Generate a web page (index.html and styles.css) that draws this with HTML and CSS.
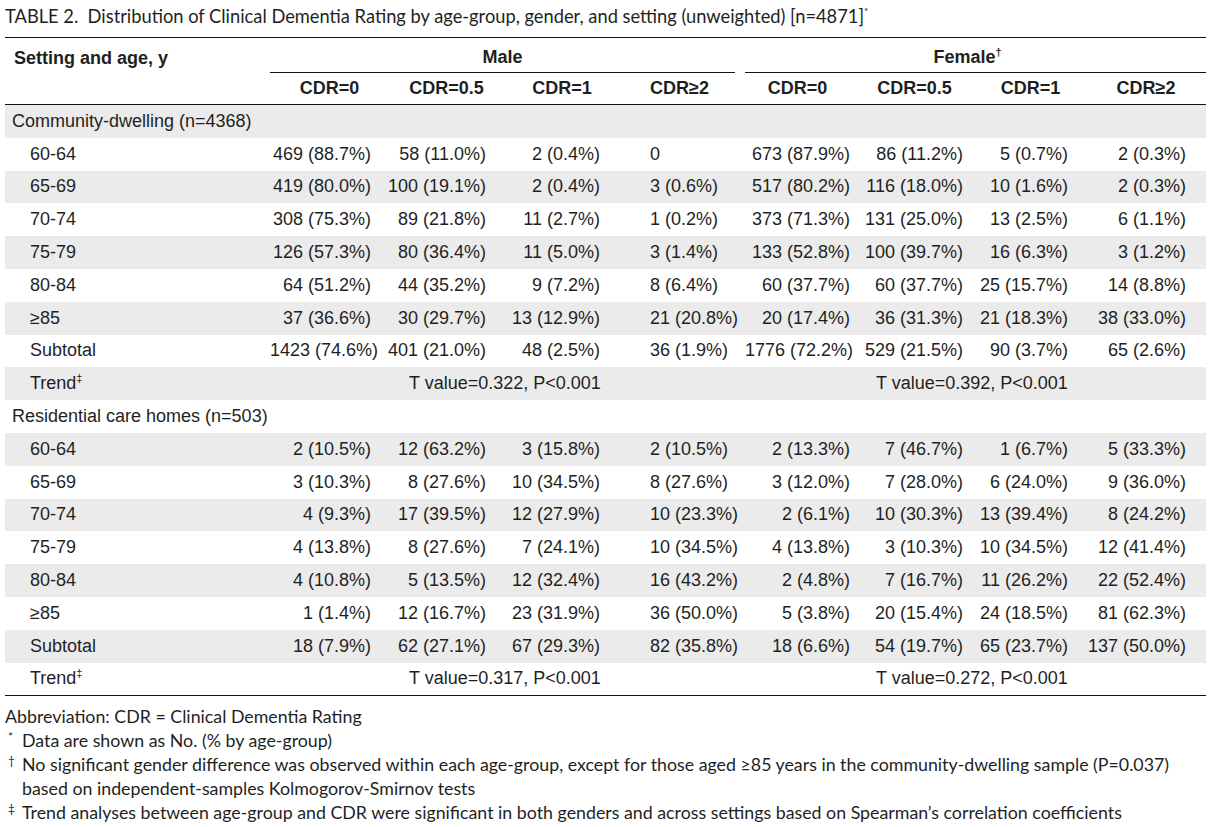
FILE: index.html
```html
<!DOCTYPE html>
<html lang="en">
<head>
<meta charset="utf-8">
<title>Table 2</title>
<link rel="stylesheet" href="styles.css">
</head>
<body>
<div class="page">
  <p class="caption">TABLE 2.&nbsp; Distribution of Clinical Dementia Rating by age-group, gender, and setting (unweighted) [n=4871]<sup>*</sup></p>
  <table class="cdr">
    <colgroup>
      <col class="c-label">
      <col class="c-m0"><col class="c-m05"><col class="c-m1"><col class="c-m2">
      <col class="c-gap">
      <col class="c-f0"><col class="c-f05"><col class="c-f1"><col class="c-f2">
    </colgroup>
    <thead>
      <tr class="h1">
        <th class="lbl">Setting and age, y</th>
        <th colspan="4" class="grp">Male</th>
        <th class="gap"></th>
        <th colspan="4" class="grp grp-f">Female<sup>†</sup></th>
      </tr>
      <tr class="h2">
        <th></th>
        <th class="hm0">CDR=0</th><th class="hm05">CDR=0.5</th><th class="hm1">CDR=1</th><th class="hm2">CDR≥2</th>
        <th class="gap"></th>
        <th class="hf0">CDR=0</th><th class="hf05">CDR=0.5</th><th class="hf1">CDR=1</th><th class="hf2">CDR≥2</th>
      </tr>
    </thead>
    <tbody>
      <tr class="section"><td colspan="10">Community-dwelling (n=4368)</td></tr>
      <tr><td class="age">60-64</td><td>469 (88.7%)</td><td>58 (11.0%)</td><td>2 (0.4%)</td><td class="l">0</td><td></td><td>673 (87.9%)</td><td>86 (11.2%)</td><td>5 (0.7%)</td><td class="rf">2 (0.3%)</td></tr>
      <tr><td class="age">65-69</td><td>419 (80.0%)</td><td>100 (19.1%)</td><td>2 (0.4%)</td><td class="l">3 (0.6%)</td><td></td><td>517 (80.2%)</td><td>116 (18.0%)</td><td>10 (1.6%)</td><td class="rf">2 (0.3%)</td></tr>
      <tr><td class="age">70-74</td><td>308 (75.3%)</td><td>89 (21.8%)</td><td>11 (2.7%)</td><td class="l">1 (0.2%)</td><td></td><td>373 (71.3%)</td><td>131 (25.0%)</td><td>13 (2.5%)</td><td class="rf">6 (1.1%)</td></tr>
      <tr><td class="age">75-79</td><td>126 (57.3%)</td><td>80 (36.4%)</td><td>11 (5.0%)</td><td class="l">3 (1.4%)</td><td></td><td>133 (52.8%)</td><td>100 (39.7%)</td><td>16 (6.3%)</td><td class="rf">3 (1.2%)</td></tr>
      <tr><td class="age">80-84</td><td>64 (51.2%)</td><td>44 (35.2%)</td><td>9 (7.2%)</td><td class="l">8 (6.4%)</td><td></td><td>60 (37.7%)</td><td>60 (37.7%)</td><td>25 (15.7%)</td><td class="rf">14 (8.8%)</td></tr>
      <tr><td class="age">≥85</td><td>37 (36.6%)</td><td>30 (29.7%)</td><td>13 (12.9%)</td><td class="l">21 (20.8%)</td><td></td><td>20 (17.4%)</td><td>36 (31.3%)</td><td>21 (18.3%)</td><td class="rf">38 (33.0%)</td></tr>
      <tr><td class="age">Subtotal</td><td>1423 (74.6%)</td><td>401 (21.0%)</td><td>48 (2.5%)</td><td class="l">36 (1.9%)</td><td></td><td>1776 (72.2%)</td><td>529 (21.5%)</td><td>90 (3.7%)</td><td class="rf">65 (2.6%)</td></tr>
      <tr><td class="age">Trend<sup>‡</sup></td><td></td><td colspan="3" class="trend-m">T value=0.322, P&lt;0.001</td><td></td><td></td><td colspan="3" class="trend-f">T value=0.392, P&lt;0.001</td></tr>
      <tr class="section"><td colspan="10">Residential care homes (n=503)</td></tr>
      <tr><td class="age">60-64</td><td>2 (10.5%)</td><td>12 (63.2%)</td><td>3 (15.8%)</td><td class="l">2 (10.5%)</td><td></td><td>2 (13.3%)</td><td>7 (46.7%)</td><td>1 (6.7%)</td><td class="rf">5 (33.3%)</td></tr>
      <tr><td class="age">65-69</td><td>3 (10.3%)</td><td>8 (27.6%)</td><td>10 (34.5%)</td><td class="l">8 (27.6%)</td><td></td><td>3 (12.0%)</td><td>7 (28.0%)</td><td>6 (24.0%)</td><td class="rf">9 (36.0%)</td></tr>
      <tr><td class="age">70-74</td><td>4 (9.3%)</td><td>17 (39.5%)</td><td>12 (27.9%)</td><td class="l">10 (23.3%)</td><td></td><td>2 (6.1%)</td><td>10 (30.3%)</td><td>13 (39.4%)</td><td class="rf">8 (24.2%)</td></tr>
      <tr><td class="age">75-79</td><td>4 (13.8%)</td><td>8 (27.6%)</td><td>7 (24.1%)</td><td class="l">10 (34.5%)</td><td></td><td>4 (13.8%)</td><td>3 (10.3%)</td><td>10 (34.5%)</td><td class="rf">12 (41.4%)</td></tr>
      <tr><td class="age">80-84</td><td>4 (10.8%)</td><td>5 (13.5%)</td><td>12 (32.4%)</td><td class="l">16 (43.2%)</td><td></td><td>2 (4.8%)</td><td>7 (16.7%)</td><td>11 (26.2%)</td><td class="rf">22 (52.4%)</td></tr>
      <tr><td class="age">≥85</td><td>1 (1.4%)</td><td>12 (16.7%)</td><td>23 (31.9%)</td><td class="l">36 (50.0%)</td><td></td><td>5 (3.8%)</td><td>20 (15.4%)</td><td>24 (18.5%)</td><td class="rf">81 (62.3%)</td></tr>
      <tr><td class="age">Subtotal</td><td>18 (7.9%)</td><td>62 (27.1%)</td><td>67 (29.3%)</td><td class="l">82 (35.8%)</td><td></td><td>18 (6.6%)</td><td>54 (19.7%)</td><td>65 (23.7%)</td><td class="rf">137 (50.0%)</td></tr>
      <tr><td class="age">Trend<sup>‡</sup></td><td></td><td colspan="3" class="trend-m">T value=0.317, P&lt;0.001</td><td></td><td></td><td colspan="3" class="trend-f">T value=0.272, P&lt;0.001</td></tr>
    </tbody>
  </table>
  <div class="notes">
    <p class="abbr">Abbreviation: CDR = Clinical Dementia Rating</p>
    <div class="note"><span class="sym">*</span><span class="txt">Data are shown as No. (% by age-group)</span></div>
    <div class="note"><span class="sym">†</span><span class="txt">No significant gender difference was observed within each age-group, except for those aged ≥85 years in the community-dwelling sample (P=0.037)<br>based on independent-samples Kolmogorov-Smirnov tests</span></div>
    <div class="note"><span class="sym">‡</span><span class="txt">Trend analyses between age-group and CDR were significant in both genders and across settings based on Spearman’s correlation coefficients</span></div>
  </div>
</div>
</body>
</html>
```

FILE: styles.css
```css
html, body {
  margin: 0;
  padding: 0;
  background: #ffffff;
}

.page {
  padding: 0 5px;
  color: #1f1f1f;
}

.caption {
  margin: 0;
  padding-top: 5px;
  height: 37px;
  box-sizing: border-box;
  font-family: "Lato", "Open Sans", sans-serif;
  font-size: 18.3px;
  line-height: 22px;
  white-space: nowrap;
}

.caption sup {
  font-size: 10px;
  vertical-align: 8px;
  line-height: 0;
}

.cdr {
  width: 1201px;
  table-layout: fixed;
  border-collapse: collapse;
  font-family: "Liberation Sans", Arial, sans-serif;
  font-size: 18px;
  color: #1f1f1f;
  border-top: 1px solid #111;
  border-bottom: 1px solid #111;
}

.c-label { width: 265px; }
.c-m0 { width: 113px; }
.c-m05 { width: 115px; }
.c-m1 { width: 114px; }
.c-m2 { width: 123px; }
.c-gap { width: 10px; }
.c-f0 { width: 117px; }
.c-f05 { width: 113px; }
.c-f1 { width: 105px; }
.c-f2 { width: 126px; }

.cdr th {
  font-weight: bold;
  padding: 0;
  white-space: nowrap;
}

.cdr .h1 th {
  height: 35px;
  vertical-align: bottom;
  padding-bottom: 4px;
  box-sizing: border-box;
}

.cdr .h1 .grp {
  border-bottom: 1px solid #111;
  text-align: center;
}

.cdr .h1 .grp-f {
  padding-right: 16px;
}

.cdr .h1 .lbl {
  text-align: left;
  padding-left: 9px;
}

.cdr sup {
  font-size: 11px;
  vertical-align: 7px;
  line-height: 0;
}

.cdr .h2 th {
  height: 32px;
  box-sizing: border-box;
  text-align: center;
  border-bottom: 1px solid #111;
}

.cdr .h2 .hm0 { padding-left: 6px; }
.cdr .h2 .hm05 { padding-left: 12px; }
.cdr .h2 .hm1 { padding-left: 14px; }
.cdr .h2 .hf0 { padding-right: 12px; }
.cdr .h2 .hf05 { padding-right: 8px; }
.cdr .h2 .hf1 { padding-left: 6px; }
.cdr .h2 .hf2 { padding-left: 6px; }

.cdr .h2 .hm2 {
  text-align: left;
  padding-left: 38px;
}

.cdr td {
  height: 32.8px;
  padding: 0 12px 0 0;
  text-align: right;
  white-space: nowrap;
}

.cdr tbody tr:nth-child(odd) td {
  background: #ebebeb;
}

.cdr td.age {
  text-align: left;
  padding-left: 25px;
}

.cdr tr.section td {
  text-align: left;
  padding-left: 7px;
}

.cdr td.l {
  text-align: left;
  padding-left: 38px;
}

.cdr td.rf {
  padding-right: 20px;
}

.cdr td.trend-m {
  text-align: left;
  padding-left: 26px;
}

.cdr td.trend-f {
  text-align: left;
  padding-left: 14px;
}

.notes {
  padding-top: 8px;
  font-family: "Lato", "Open Sans", sans-serif;
  font-size: 17.8px;
  line-height: 24px;
}

.abbr {
  margin: 0;
}

.note {
  display: flex;
}

.note .sym {
  width: 17px;
  flex: none;
  padding-left: 3px;
  box-sizing: border-box;
  font-size: 12px;
  line-height: 18px;
}

.note .txt {
  flex: 1;
  white-space: nowrap;
}
```
